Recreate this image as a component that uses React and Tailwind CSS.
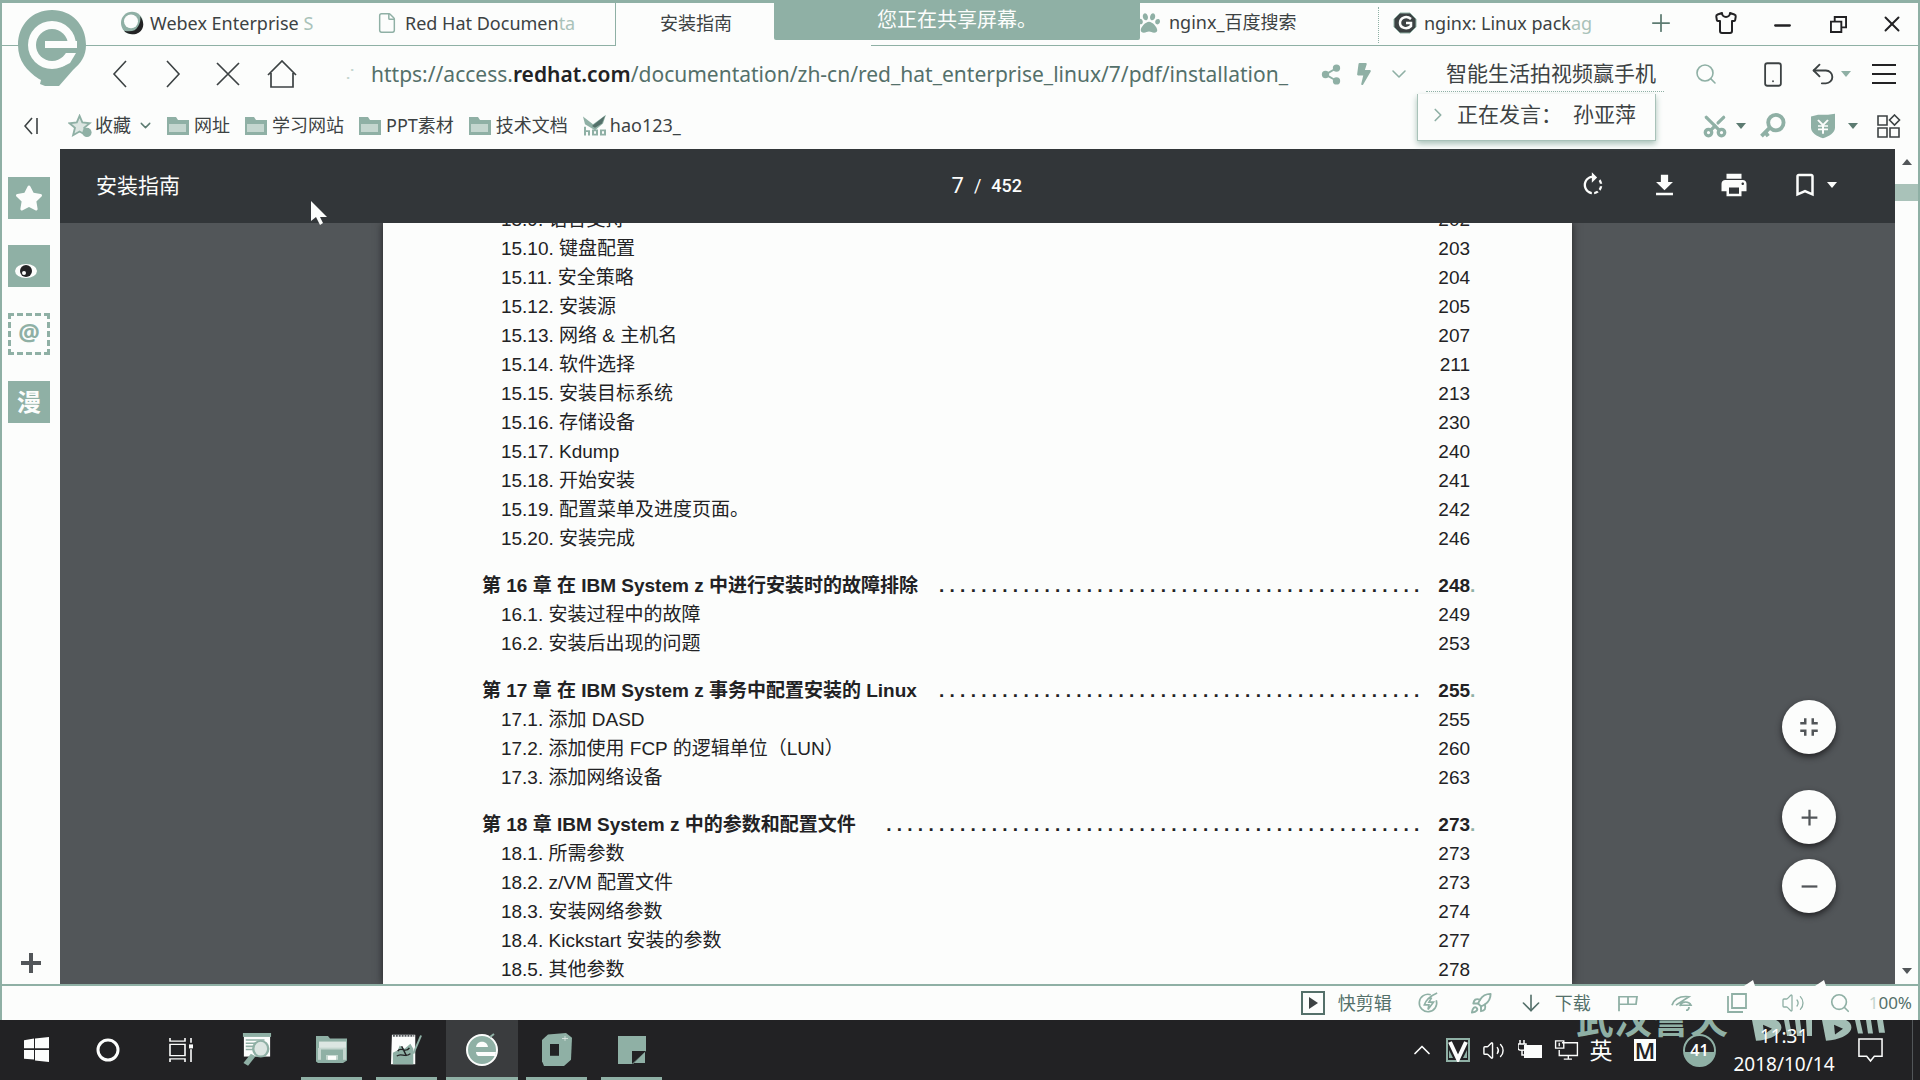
import React from "react";
import {
  ChevronRight, ChevronDown, ChevronUp, X, Plus, Minus, Search,
  Shirt, Smartphone, Undo2, Share2, File, ArrowDown, Rocket, Volume2,
  Scissors,
} from "lucide-react";
import { MdFileDownload, MdPrint, MdBookmarkBorder, MdRotateRight, MdFullscreenExit, MdAdd, MdRemove } from "react-icons/md";
import { FaPaw, FaBolt, FaStar } from "react-icons/fa";

const UI = "font-['Noto_Sans','Noto_Sans_CJK_SC',sans-serif]";
const DOC = "font-['Liberation_Sans','Noto_Sans_CJK_SC',sans-serif]";

const chapters = [
  {
    items: [
      ["15.9. 语言支持", "202"], ["15.10. 键盘配置", "203"], ["15.11. 安全策略", "204"],
      ["15.12. 安装源", "205"], ["15.13. 网络 & 主机名", "207"], ["15.14. 软件选择", "211"],
      ["15.15. 安装目标系统", "213"], ["15.16. 存储设备", "230"], ["15.17. Kdump", "240"],
      ["15.18. 开始安装", "241"], ["15.19. 配置菜单及进度页面。", "242"], ["15.20. 安装完成", "246"],
    ],
  },
  {
    title: "第 16 章 在 IBM System z 中进行安装时的故障排除", page: "248", dots: 46,
    items: [["16.1. 安装过程中的故障", "249"], ["16.2. 安装后出现的问题", "253"]],
  },
  {
    title: "第 17 章 在 IBM System z 事务中配置安装的 Linux", page: "255", dots: 46,
    items: [["17.1. 添加 DASD", "255"], ["17.2. 添加使用 FCP 的逻辑单位（LUN）", "260"], ["17.3. 添加网络设备", "263"]],
  },
  {
    title: "第 18 章 IBM System z 中的参数和配置文件", page: "273", dots: 51,
    items: [
      ["18.1. 所需参数", "273"], ["18.2. z/VM 配置文件", "273"], ["18.3. 安装网络参数", "274"],
      ["18.4. Kickstart 安装的参数", "277"], ["18.5. 其他参数", "278"],
    ],
  },
];

function Btn({ label, className = "", children }) {
  return (
    <button type="button" aria-label={label} className={`flex shrink-0 items-center justify-center ${className}`}>
      {children}
    </button>
  );
}

function Caret({ className = "" }) {
  return (
    <svg viewBox="0 0 10 6" className={`h-[6px] w-[10px] shrink-0 ${className}`} fill="currentColor" aria-hidden="true">
      <path d="M0 0h10L5 6z" />
    </svg>
  );
}

function BrowserLogo() {
  return (
    <svg viewBox="0 0 70 78" className="absolute left-[15px] top-[6px] z-20 h-[78px] w-[70px]" aria-hidden="true">
      <path d="M35 1C15 1 1 16 1 36c0 16 9 26 21 34l2 1-1 4 5 2h14l14-16c8-7 13-14 13-25C69 16 55 1 35 1z" fill="#8fb0a5" />
      <circle cx="35" cy="36" r="24" fill="#fcfdfc" />
      <circle cx="35" cy="36" r="16" fill="#8fb0a5" />
      <path d="M28 32h32v7H28z" fill="#fcfdfc" />
      <path d="M20 32h6v7h-6z" fill="#8fb0a5" />
      <path d="M26 39h36v5H26z" fill="#8fb0a5" />
      <path d="M50 44h9l-6 10-8 4z" fill="#fcfdfc" />
    </svg>
  );
}

function Folder() {
  return (
    <svg viewBox="0 0 22 20" className="h-[20px] w-[22px] shrink-0" aria-hidden="true">
      <path d="M0 1h9l2 3h11v15H0z" fill="#8fb0a5" />
      <path d="M2 8h17v8H2z" fill="#c4d6cf" />
    </svg>
  );
}

function TabStrip() {
  return (
    <div className="relative flex h-[43px] shrink-0 items-stretch text-[18px] text-[#3c4243]">
      <div className="flex w-[614px] items-start border-b border-r border-[#8fb0a5] pl-[118px]">
        <button type="button" className="flex h-[40px] w-[246px] items-center">
          <svg viewBox="0 0 24 28" preserveAspectRatio="none" className="mr-[6px] h-[24px] w-[24px] shrink-0" aria-hidden="true">
            <ellipse cx="12" cy="14" rx="11" ry="13" fill="#8fb0a5" />
            <path d="M20 6c5 7 4 15-1 19-5 4-12 2-15-2 7 2 12 0 14-5 2-4 3-8 2-12z" fill="#222224" />
            <ellipse cx="11" cy="12" rx="7" ry="8" fill="#fcfdfc" />
          </svg>
          <span className="whitespace-nowrap">Webex Enterprise <span className="text-[#a9c2b9]">S</span></span>
        </button>
        <button type="button" className="flex h-[40px] items-center pl-[10px]">
          <File className="mr-[7px] h-[24px] w-[22px] text-[#8fb0a5]" strokeWidth={1.6} />
          <span className="whitespace-nowrap">Red Hat Documen<span className="text-[#a9c2b9]">ta</span></span>
        </button>
      </div>
      <button type="button" className="flex h-[40px] w-[255px] items-center pl-[44px]">安装指南</button>
      <div className="flex flex-1 items-start border-b border-[#8fb0a5]">
        <button type="button" className="ml-auto flex h-[39px] w-[240px] items-center">
          <FaPaw className="mr-[9px] h-[22px] w-[22px] shrink-0 text-[#8fb0a5]" />
          <span className="whitespace-nowrap">nginx_百度搜索</span>
        </button>
        <button type="button" className="mt-1 flex h-[36px] w-[255px] items-center border-l border-dotted border-[#8fb0a5] pb-1 pl-[14px]">
          <svg viewBox="0 0 24 24" className="mr-[7px] h-[24px] w-[24px] shrink-0" aria-hidden="true">
            <path d="M7 2h10l6 6v8l-6 6H7l-6-6V8z" fill="#3c4243" stroke="#8fb0a5" />
            <path d="M18 8c-5-4-11-1-11 4s7 7 11 3v-3h-5" fill="none" stroke="#fcfdfc" strokeWidth="2.5" />
          </svg>
          <span className="whitespace-nowrap">nginx: Linux pack<span className="text-[#a9c2b9]">ag</span></span>
        </button>
        <Btn label="新标签页" className="mr-[9px] h-[40px] w-14 text-[#5c7b71]"><Plus className="h-[28px] w-[28px]" strokeWidth={1.5} /></Btn>
        <Btn label="皮肤" className="h-[40px] w-14 text-[#222224]"><Shirt className="h-[24px] w-[24px]" strokeWidth={2} /></Btn>
        <Btn label="最小化" className="h-[44px] w-14 text-[#222224]"><Minus className="h-[25px] w-[25px]" strokeWidth={2.2} /></Btn>
        <Btn label="还原" className="h-[42px] w-14 text-[#222224]">
          <svg viewBox="0 0 18 18" className="h-[17px] w-[17px]" fill="none" stroke="currentColor" strokeWidth="2">
            <path d="M1 6h11v11H1zM5 6V1h12v11h-5" />
          </svg>
        </Btn>
        <Btn label="关闭" className="h-[42px] w-[52px] text-[#222224]"><X className="h-[26px] w-[26px]" strokeWidth={1.8} /></Btn>
      </div>
    </div>
  );
}

function AddressRow() {
  return (
    <div className="flex h-[56px] shrink-0 items-center text-[#3c4243]">
      <div className="flex w-[369px] items-center pl-[93px]">
        <Btn label="后退" className="w-[50px]"><svg viewBox="0 0 16 28" className="h-[28px] w-[16px]" fill="none" stroke="currentColor" strokeWidth="1.6"><path d="M14 1L2 14l12 13" /></svg></Btn>
        <Btn label="前进" className="w-[55px]"><svg viewBox="0 0 16 28" className="h-[28px] w-[16px]" fill="none" stroke="currentColor" strokeWidth="1.6"><path d="M2 1l12 13L2 27" /></svg></Btn>
        <Btn label="停止" className="w-[55px]"><svg viewBox="0 0 24 24" className="h-[24px] w-[24px]" fill="none" stroke="currentColor" strokeWidth="1.7"><path d="M1 1l22 22M23 1L1 23" /></svg></Btn>
        <Btn label="主页" className="w-[54px]"><svg viewBox="0 0 30 28" className="h-[28px] w-[30px]" fill="none" stroke="currentColor" strokeWidth="1.7"><path d="M1 15L15 1l14 14M4 13v14h22V13" /></svg></Btn>
        <span className="pl-9 text-[14px] text-[#c4d6cf]" aria-hidden="true">⠌</span>
      </div>
      <div role="textbox" aria-label="地址栏" className="min-w-0 flex-1 overflow-hidden whitespace-nowrap text-[21px] leading-[38px] text-[#54706a]">
        https://access.<span className="font-semibold text-[#222224]">redhat.com</span>/documentation/zh-cn/red_hat_enterprise_linux/7/pdf/installation_
      </div>
      <div className="flex w-[613px] shrink-0 items-center pl-[15px] text-[#8fb0a5]">
        <Btn label="分享"><Share2 className="h-[23px] w-[22px]" fill="currentColor" /></Btn>
        <Btn label="极速模式" className="ml-[13px]"><FaBolt className="h-[22px] w-[18px]" /></Btn>
        <Btn label="展开" className="ml-[14px]"><ChevronDown className="h-[24px] w-[24px]" strokeWidth={1.6} /></Btn>
        <input
          aria-label="搜索"
          defaultValue="智能生活拍视频赢手机"
          className="ml-[15px] h-[36px] w-[238px] border-b border-dotted border-[#8fb0a5] bg-transparent pb-1 pl-[20px] text-[21px] text-[#3c4243] outline-none"
        />
        <Btn label="开始搜索" className="ml-[30px]"><Search className="h-[24px] w-[24px]" strokeWidth={1.6} /></Btn>
        <Btn label="手机" className="ml-[41px] text-[#3c4243]"><Smartphone className="h-[27px] w-[28px]" strokeWidth={1.6} /></Btn>
        <Btn label="撤销" className="ml-[22px] gap-1 text-[#3c4243]"><Undo2 className="h-[28px] w-[28px]" strokeWidth={1.6} /><Caret className="text-[#8fb0a5]" /></Btn>
        <Btn label="菜单" className="ml-[21px] text-[#222224]">
          <svg viewBox="0 0 24 20" className="h-[20px] w-[24px]" fill="none" stroke="currentColor" strokeWidth="1.8"><path d="M0 1h24M0 10h24M0 19h24" /></svg>
        </Btn>
      </div>
    </div>
  );
}

function BookmarkRow() {
  const folders = ["网址", "学习网站", "PPT素材", "技术文档"];
  return (
    <div className="flex h-[47px] shrink-0 items-center text-[18px] text-[#3c4243]">
      <Btn label="收起" className="ml-[20px] w-[18px]">
        <svg viewBox="0 0 14 18" className="h-[18px] w-[14px]" fill="none" stroke="currentColor" strokeWidth="1.6"><path d="M8 1L1 9l7 8M13 1v16" /></svg>
      </Btn>
      <button type="button" className="ml-[28px] flex items-center">
        <svg viewBox="0 0 26 26" className="h-[24px] w-[25px]" aria-hidden="true">
          <path d="M12 2l3 7 8 1-6 5 2 8-7-4-7 4 2-8-6-5 8-1z" fill="#dce6e2" stroke="#8fb0a5" strokeWidth="2" />
          <circle cx="20" cy="20" r="5" fill="#8fb0a5" />
        </svg>
        <span className="ml-[2px]">收藏</span>
        <ChevronDown className="ml-[6px] h-[17px] w-[17px] text-[#5c7b71]" strokeWidth={2} />
      </button>
      <div className="ml-[13px] flex items-center gap-[15px]">
        {folders.map((f) => (
          <button type="button" key={f} className="flex items-center gap-[5px] whitespace-nowrap"><Folder />{f}</button>
        ))}
      </div>
      <a href="#hao123" className="ml-[14px] flex items-center">
        <svg viewBox="0 0 26 28" preserveAspectRatio="none" className="mr-[2px] h-[24px] w-[26px]" aria-hidden="true">
          <path d="M1 3l10 9L24 1l-3 10-8 8L3 12z" fill="#8fb0a5" />
          <path d="M10 14L23 2l-3 9-7 5z" fill="#54706a" />
          <path d="M3 15v10M3 20h4v5M11 19h4v5h-4zM19 19h4v5h-4z" fill="none" stroke="#8fb0a5" strokeWidth="2" />
        </svg>
        <span>hao123_</span>
      </a>
      <div className="ml-auto flex items-center pr-[17px] text-[#8fb0a5]">
        <Btn label="截图" className="gap-[8px]"><Scissors className="h-[26px] w-[26px] -rotate-90" strokeWidth={3} /><Caret className="text-[#5c7b71]" /></Btn>
        <Btn label="密码" className="ml-[14px]">
          <svg viewBox="0 0 26 26" className="h-[25px] w-[26px]" fill="none" stroke="currentColor" strokeWidth="4"><circle cx="16" cy="10" r="8" /><path d="M10 15L1 24M5 20l3 4" /></svg>
        </Btn>
        <Btn label="网购先赔" className="ml-[24px] gap-[12px]">
          <svg viewBox="0 0 26 30" preserveAspectRatio="none" className="h-[26px] w-[26px]" aria-hidden="true">
            <path d="M1 4l7-2h10l7-1v16c0 6-6 10-12 12C7 27 1 23 1 17z" fill="#8fb0a5" />
            <path d="M8 8l5 6 5-6M13 14v10M8 15h10M8 19h10" fill="none" stroke="#fcfdfc" strokeWidth="2" />
          </svg>
          <Caret className="text-[#5c7b71]" />
        </Btn>
        <Btn label="扩展" className="ml-[19px] text-[#3c4243]">
          <svg viewBox="0 0 24 24" className="h-[24px] w-[24px]" fill="none" stroke="currentColor" strokeWidth="1.6"><path d="M1 2h9v9H1zM1 14h9v9H1zM13 14h9v9h-9zM17.500 1l5 5-5 5-5-5z" /></svg>
        </Btn>
      </div>
    </div>
  );
}

function SideBar() {
  const tile = "h-[42px] w-[42px] bg-[#8fb0a5] text-[#fcfdfc]";
  return (
    <nav className="flex w-[58px] shrink-0 flex-col items-start gap-[26px] pb-[9px] pl-[6px] pt-[28px]">
      <Btn label="收藏夹" className={tile}><FaStar className="h-[26px] w-[28px]" /></Btn>
      <Btn label="关注" className={tile}>
        <svg viewBox="0 0 42 42" className="h-[42px] w-[42px]" aria-hidden="true">
          <ellipse cx="18" cy="26" rx="11" ry="7" fill="#fcfdfc" />
          <circle cx="18" cy="26" r="6" fill="#222224" />
          <circle cx="16" cy="28" r="2" fill="#fcfdfc" />
        </svg>
      </Btn>
      <Btn label="邮箱" className="h-[42px] w-[42px] border-3 border-dashed border-[#8fb0a5] pb-1 text-[24px] font-bold leading-none text-[#8fb0a5]">@</Btn>
      <Btn label="漫画" className={`${tile} text-[24px] font-bold leading-none`}>漫</Btn>
      <Btn label="添加" className="mt-auto h-[24px] w-[46px] text-[#525659]">
        <svg viewBox="0 0 20 20" className="h-[20px] w-[20px]" stroke="currentColor" strokeWidth="4"><path d="M10 0v20M0 10h20" /></svg>
      </Btn>
    </nav>
  );
}

function TocPage() {
  return (
    <article className={`mx-auto flex w-[64.8%] flex-col gap-[18px] bg-[#fcfdfc] pl-[99px] pr-[102px] text-[19px] leading-[29px] text-[#222224] shadow-[0_0_8px_#222224] ${DOC}`}>
      {chapters.map((c, i) => (
        <section key={i} className={i === 0 ? "-mt-[18px]" : ""}>
          {c.title && (
            <h2 className="flex whitespace-nowrap font-bold">
              <span>{c.title}</span>
              <span className="ml-auto mr-[19px]" aria-hidden="true">{". ".repeat(c.dots)}</span>
              <span>{c.page}</span>
              <span className="-mr-[5px] w-[5px] text-[#8fb0a5]">.</span>
            </h2>
          )}
          <ul>
            {c.items.map(([t, p]) => (
              <li key={t} className="flex justify-between whitespace-nowrap pl-[19px]"><span>{t}</span><span>{p}</span></li>
            ))}
          </ul>
        </section>
      ))}
    </article>
  );
}

function Viewer() {
  const fab = "h-[54px] w-[54px] rounded-full bg-[#fcfdfc] text-[#525659] shadow-[0_3px_6px_#222224]";
  return (
    <main className="relative flex min-w-0 flex-1 flex-col overflow-hidden bg-[#525659]">
      <header className="grid h-[72px] shrink-0 grid-cols-3 items-center bg-[#323639] pl-[36px] pr-[57px] text-[#fcfdfc]">
        <h1 className="text-[21px] leading-none">安装指南</h1>
        <div className="flex items-center justify-center gap-[10px] pl-[34px] font-['Roboto',sans-serif] text-[18px] tabular-nums">
          <input aria-label="页码" defaultValue="7" className="w-[18px] bg-transparent text-right text-[22px] outline-none" />
          <span>/</span><span className="font-medium">452</span>
        </div>
        <div className="flex items-center justify-end">
          <Btn label="旋转"><MdRotateRight className="h-[28px] w-[28px]" /></Btn>
          <Btn label="下载" className="ml-[43px]"><MdFileDownload className="h-[29px] w-[29px]" /></Btn>
          <Btn label="打印" className="ml-[40px]"><MdPrint className="h-[30px] w-[30px]" /></Btn>
          <Btn label="书签" className="ml-[41px] gap-[6px]"><MdBookmarkBorder className="h-[30px] w-[30px]" /><Caret className="w-[12px]" /></Btn>
        </div>
      </header>
      <div className="min-h-0 flex-1 overflow-hidden border-t-2 border-[#323639]"><TocPage /></div>
      <svg viewBox="0 0 18 26" className="absolute left-[250px] top-[51px] h-[26px] w-[18px]" fill="#fcfdfc" aria-hidden="true">
        <path d="M1 1v20l5-4 4 8 3-2-3-6h7z" />
      </svg>
      <div className="absolute bottom-[71px] right-[59px] flex flex-col">
        <Btn label="适合页面" className={fab}><MdFullscreenExit className="h-[30px] w-[30px]" /></Btn>
        <Btn label="放大" className={`mt-[36px] ${fab}`}><MdAdd className="h-[27px] w-[27px]" /></Btn>
        <Btn label="缩小" className={`mt-[15px] ${fab}`}><MdRemove className="h-[27px] w-[27px]" /></Btn>
      </div>
    </main>
  );
}

function ScrollBar() {
  return (
    <div className="flex w-[23px] shrink-0 flex-col items-center bg-[#fcfdfc] py-[10px] text-[#525659]">
      <Caret className="mb-[19px] rotate-180" />
      <div className="h-[17px] w-full bg-[#a9c2b9]" />
      <Caret className="mt-auto" />
    </div>
  );
}

function StatusBar() {
  return (
    <footer className="relative flex h-[36px] shrink-0 items-center justify-end border-t-2 border-[#8fb0a5] pr-[6px] text-[18px] text-[#8fb0a5]">
      <svg viewBox="0 0 82 6" className="absolute -top-[6px] right-[92px] h-[6px] w-[82px]" fill="#fcfdfc" aria-hidden="true">
        <path d="M0 6l9-6 2 6zM71 6l9-6 2 6z" />
      </svg>
      <button type="button" className="flex items-center text-[#54706a]">
        <svg viewBox="0 0 24 24" className="mr-[13px] h-[24px] w-[24px]" fill="none" stroke="currentColor" strokeWidth="2"><path d="M1 1h22v22H1z" /><path d="M8 6l9 6-9 6z" fill="#3c4243" stroke="none" /></svg>
        快剪辑
      </button>
      <Btn label="加速" className="ml-[24px]">
        <svg viewBox="0 0 24 24" className="h-[22px] w-[24px]" fill="none" stroke="currentColor" strokeWidth="1.800"><path d="M15 3A9.500 9.500 0 1 0 21 9M22 1C15 4 10 8 8 14h5l-1 5 6-8h-5l3-5" /></svg>
      </Btn>
      <Btn label="加速器" className="ml-[29px]"><Rocket className="h-[23px] w-[24px]" strokeWidth={2} /></Btn>
      <button type="button" className="ml-[24px] flex items-center gap-[10px] text-[#54706a]"><ArrowDown className="h-[26px] w-[28px]" strokeWidth={1.5} />下载</button>
      <Btn label="标记" className="ml-[26px]">
        <svg viewBox="0 0 22 20" preserveAspectRatio="none" className="h-[17px] w-[22px]" fill="none" stroke="currentColor" strokeWidth="1.800"><path d="M2 19V2h18l-1 9H2M11 2v9h8" /></svg>
      </Btn>
      <Btn label="清理" className="ml-[32px]">
        <svg viewBox="0 0 22 20" preserveAspectRatio="none" className="h-[17px] w-[22px]" fill="none" stroke="currentColor" strokeWidth="1.800"><path d="M1 12C3 5 9 1 18 2L5 12M9 13c1-6 9-6 11-1H9M18 14c0 2-1 4-3 4" /></svg>
      </Btn>
      <Btn label="窗口" className="ml-[34px]">
        <svg viewBox="0 0 20 20" className="h-[20px] w-[20px]" fill="none" stroke="currentColor" strokeWidth="1.800"><path d="M5 1h14v14H5zM1 3v16h15" /></svg>
      </Btn>
      <Btn label="声音" className="ml-[34px]"><Volume2 className="h-[24px] w-[24px]" strokeWidth={1.3} /></Btn>
      <Btn label="缩放" className="ml-[24px]"><Search className="h-[22px] w-[22px]" strokeWidth={1.8} /></Btn>
      <span className="ml-[18px] text-[17px] text-[#54706a]"><span className="text-[#c4d6cf]">1</span>00%</span>
    </footer>
  );
}

function Task({ label, state = "", children }) {
  const bg = state === "active" ? "bg-[#3a3c3e] border-[#8fb0a5]" : state === "open" ? "border-[#8fb0a5]" : "border-transparent";
  return (
    <button type="button" aria-label={label} className="flex h-full w-[75px] shrink-0 justify-center">
      <span className={`flex h-full items-center justify-center border-b-3 pt-[2px] ${state === "active" ? "w-[72px]" : "w-[61px]"} ${bg}`}>{children}</span>
    </button>
  );
}

function Watermark() {
  return (
    <div className="pointer-events-none absolute inset-y-0 right-[34px] flex w-[310px] items-start overflow-hidden" aria-hidden="true">
      <span className="-mt-[21px] whitespace-nowrap text-[38px] font-bold leading-[38px] text-[#8fb0a5]">武汉誉天</span>
      <svg viewBox="0 0 136 30" preserveAspectRatio="none" className="ml-auto h-[24px] w-[136px]" fill="#a3beb5">
        <path d="M2 0h24c5 3 6 8 5 12-2 7-12 13-25 14z" />
        <path d="M34 0h5l3 20h-5zM45 0h5l2 20h-5zM56 0h6v20h-5z" />
        <path d="M72 0h24c5 3 6 8 5 12-2 7-12 13-25 14z" />
        <path d="M105 0h5l3 17h-5zM116 0h5l2 17h-5zM127 0h6l2 16h-6z" />
        <path d="M13 6l9 5-8 7zM84 6l9 5-8 7z" fill="#222224" />
      </svg>
    </div>
  );
}

function TaskBar() {
  return (
    <div className="relative flex h-[60px] shrink-0 items-stretch bg-[#222224] text-[#fcfdfc]">
      <Watermark />
      <div className="flex">
        <div className="flex w-[219px]">
          <Task label="开始">
            <svg viewBox="0 0 25 31" preserveAspectRatio="none" className="mr-[2px] h-[25px] w-[25px]" fill="#fcfdfc"><path d="M0 4l10-2v12H0zM11 2l14-2v14H11zM0 16h10v12L0 27zM11 16h14v15l-14-2z" /></svg>
          </Task>
          <Task label="搜索">
            <svg viewBox="0 0 24 24" className="mr-[9px] h-[24px] w-[24px]" fill="none" stroke="#fcfdfc" strokeWidth="3"><circle cx="12" cy="12" r="10" /></svg>
          </Task>
          <Task label="任务视图">
            <svg viewBox="0 0 25 30" preserveAspectRatio="none" className="mr-[13px] h-[24px] w-[25px]" fill="none" stroke="#fcfdfc" strokeWidth="1.600"><path d="M1 0v4h15V0M1 8h15v14H1zM1 30v-4h15v4M22 0v6M22 14v16" /><path d="M20 8h4v5h-4z" fill="#fcfdfc" stroke="none" /></svg>
          </Task>
        </div>
        <Task label="文档搜索">
          <svg viewBox="0 0 32 42" preserveAspectRatio="none" className="h-[33px] w-[30px]"><path d="M2 1h28v29H2z" fill="#fcfdfc" /><path d="M1 0h30v5H1z" fill="#8fb0a5" /><path d="M4 9h20M4 13h14M4 17h10M4 21h8" stroke="#8fb0a5" strokeWidth="2" /><ellipse cx="20" cy="20" rx="8" ry="10" fill="#dce6e2" stroke="#8fb0a5" strokeWidth="2.500" /><path d="M12 28L4 40" stroke="#8fb0a5" strokeWidth="6" /></svg>
        </Task>
        <Task label="文件资源管理器" state="open">
          <svg viewBox="0 0 32 34" preserveAspectRatio="none" className="h-[27px] w-[32px]"><path d="M0 0h12l2 3h17v28l-4 3H2l-2-2z" fill="#8fb0a5" /><path d="M3 7h27v8H3z" fill="#dce6e2" /><path d="M2 15h28v15H2z" fill="#c4d6cf" /><path d="M5 17h22v17h-5v-10H10v10H5z" fill="#8fb0a5" /><path d="M12 25h8v5h-8z" fill="#fcfdfc" /></svg>
        </Task>
        <Task label="编辑器" state="open">
          <svg viewBox="0 0 34 40" preserveAspectRatio="none" className="h-[33px] w-[33px]"><path d="M2 2h24v36H1z" fill="#fcfdfc" /><path d="M3 3h22" stroke="#525659" strokeWidth="3" strokeDasharray="2 1" /><path d="M3 24l5-3 2-6 5 4 6-6 3 6v19H3z" fill="#8fb0a5" /><path d="M8 22c3-6 8 3 12-4M7 28c5-5 8 3 14-3M12 16l5 12" fill="none" stroke="#222224" strokeWidth="1.500" /><path d="M32 3l-8 22" stroke="#8fb0a5" strokeWidth="2" /></svg>
        </Task>
        <Task label="浏览器" state="active">
          <svg viewBox="0 0 34 34" className="h-[34px] w-[34px]"><circle cx="17" cy="17" r="15" fill="#8fb0a5" stroke="#fcfdfc" strokeWidth="2" /><path d="M11 14c1-7 11-7 12 0z" fill="#fcfdfc" /><path d="M11 19h20l-1 4H13c-1-1-2-2-2-4z" fill="#fcfdfc" /><path d="M25 4l4-3" stroke="#8fb0a5" strokeWidth="2" /></svg>
        </Task>
        <Task label="录制" state="open">
          <svg viewBox="0 0 30 42" preserveAspectRatio="none" className="h-[33px] w-[30px]"><path d="M6 2l18-2 6 6-1 28-7 8H2l-2-6V9z" fill="#8fb0a5" /><path d="M8 14h9v15H8z" fill="#222224" /><path d="M23 4v6M20 7h6" stroke="#dce6e2" /></svg>
        </Task>
        <Task label="便签" state="open">
          <svg viewBox="0 0 28 28" className="h-[28px] w-[28px]"><path d="M0 0h28v15L15 28H0z" fill="#8fb0a5" /><path d="M14 15h14L14 28z" fill="#222224" /><path d="M27 16v11H16z" fill="#8fb0a5" /></svg>
        </Task>
      </div>
      <div className="relative ml-auto mr-[7px] flex items-center border-r border-[#525659] pr-[29px]">
        <Btn label="显示隐藏的图标" className="w-[37px]"><ChevronUp className="h-[28px] w-[28px]" strokeWidth={1.5} /></Btn>
        <Btn label="输入工具" className="w-[35px]">
          <svg viewBox="0 0 24 24" className="h-[24px] w-[24px]"><path d="M1 1h22v22H1z" fill="#222224" stroke="#8fb0a5" strokeWidth="2" /><path d="M4 4l8 17 8-17" fill="none" stroke="#fcfdfc" strokeWidth="4" /><path d="M3 12l4 8H3zM21 12l-4 8h4z" fill="#8fb0a5" /></svg>
        </Btn>
        <Btn label="音量" className="w-[36px]"><Volume2 className="h-[23px] w-[23px]" strokeWidth={1.5} /></Btn>
        <Btn label="电源" className="w-[38px]">
          <svg viewBox="0 0 24 20" className="h-[20px] w-[24px]"><path d="M6 5h18v13H6z" fill="#fcfdfc" /><path d="M2 0v4M6 0v4M0 4h8v4c0 3-8 3-8 0zM4 10v5h3" fill="none" stroke="#fcfdfc" strokeWidth="1.500" /></svg>
        </Btn>
        <Btn label="网络" className="w-[34px]">
          <svg viewBox="0 0 26 22" className="h-[20px] w-[25px]" fill="none" stroke="#fcfdfc" strokeWidth="1.500"><path d="M8 3h17v14H5v-6M15 17v4M10 21h9M1 1h9v8H1zM5 3v4" /></svg>
        </Btn>
        <Btn label="输入法" className="w-[36px] text-[23px] leading-none">英</Btn>
        <Btn label="中文模式" className="ml-[15px] h-[22px] w-[22px] bg-[#fcfdfc] text-[22px] font-semibold leading-none text-[#222224]">M</Btn>
        <Btn label="电量 41" className="ml-[27px] h-[33px] w-[33px] rounded-full border-2 border-[#8fb0a5] bg-linear-to-b from-[#222224] from-55% to-[#8fb0a5] to-55% text-[16px] font-semibold leading-none">41</Btn>
        <button type="button" className="ml-[13px] flex w-[110px] flex-col items-center text-[19px] leading-[28px]">
          <span>11:31</span><span>2018/10/14</span>
        </button>
        <Btn label="通知" className="ml-[19px]">
          <svg viewBox="0 0 26 26" className="h-[25px] w-[25px]" fill="none" stroke="#fcfdfc" strokeWidth="1.600"><path d="M1 1h24v18h-8l-4 5-4-5H1z" /></svg>
        </Btn>
      </div>
    </div>
  );
}

export default function App() {
  return (
    <div className={`flex h-screen flex-col overflow-hidden bg-[#fcfdfc] ${UI}`}>
      <div className="relative flex min-h-0 flex-1 flex-col border-x-2 border-t-3 border-[#8fb0a5]">
        <BrowserLogo />
        <TabStrip />
        <AddressRow />
        <BookmarkRow />
        <div className="absolute -top-[3px] left-1/2 z-10 -ml-[186px] flex h-[40px] w-[366px] items-center justify-center rounded-b-xs bg-[#8fb0a5] text-[20px] text-[#fcfdfc]">您正在共享屏幕。</div>
        <div className="absolute right-[262px] top-[91px] z-10 flex h-[47px] w-[239px] items-center border border-t-0 border-[#a9c2b9] bg-[#fcfdfc] pb-1 pl-[9px] text-[21px] text-[#3c4243] shadow-[0_3px_6px_#a9c2b9]">
          <ChevronRight className="mr-[8px] h-[22px] w-[22px] text-[#8fb0a5]" strokeWidth={1.8} />
          <span className="whitespace-nowrap">正在发言：&nbsp; 孙亚萍</span>
        </div>
        <div className="flex min-h-0 flex-1">
          <SideBar />
          <Viewer />
          <ScrollBar />
        </div>
        <StatusBar />
      </div>
      <TaskBar />
    </div>
  );
}
